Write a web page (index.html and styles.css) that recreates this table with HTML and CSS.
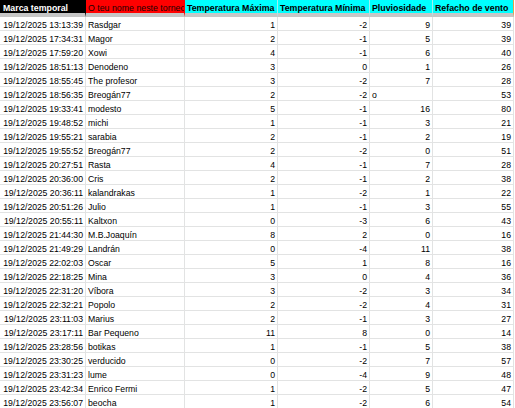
FILE: index.html
```html
<!DOCTYPE html>
<html lang="gl">
<head>
<meta charset="utf-8">
<title>Respostas</title>
<link rel="stylesheet" href="styles.css">
</head>
<body>
<div class="sheet">
  <div class="hd hd-black">Marca temporal</div>
  <div class="hd hd-red">O teu nome neste torneo</div>
  <div class="hd hd-cyan">Temperatura Máxima</div>
  <div class="hd hd-cyan">Temperatura Mínima</div>
  <div class="hd hd-cyan">Pluviosidade</div>
  <div class="hd hd-cyan hd-last">Refacho de vento</div>

  <div class="c r">19/12/2025 13:13:39</div><div class="c">Rasdgar</div><div class="c r">1</div><div class="c r">-2</div><div class="c r">9</div><div class="c r">39</div>
  <div class="c r">19/12/2025 17:34:31</div><div class="c">Magor</div><div class="c r">2</div><div class="c r">-1</div><div class="c r">5</div><div class="c r">39</div>
  <div class="c r">19/12/2025 17:59:20</div><div class="c">Xowi</div><div class="c r">4</div><div class="c r">-1</div><div class="c r">6</div><div class="c r">40</div>
  <div class="c r">19/12/2025 18:51:13</div><div class="c">Denodeno</div><div class="c r">3</div><div class="c r">0</div><div class="c r">1</div><div class="c r">26</div>
  <div class="c r">19/12/2025 18:55:45</div><div class="c">The profesor</div><div class="c r">3</div><div class="c r">-2</div><div class="c r">7</div><div class="c r">28</div>
  <div class="c r">19/12/2025 18:56:35</div><div class="c">Breogán77</div><div class="c r">2</div><div class="c r">-2</div><div class="c">o</div><div class="c r">53</div>
  <div class="c r">19/12/2025 19:33:41</div><div class="c">modesto</div><div class="c r">5</div><div class="c r">-1</div><div class="c r">16</div><div class="c r">80</div>
  <div class="c r">19/12/2025 19:48:52</div><div class="c">michi</div><div class="c r">1</div><div class="c r">-1</div><div class="c r">3</div><div class="c r">21</div>
  <div class="c r">19/12/2025 19:55:21</div><div class="c">sarabia</div><div class="c r">2</div><div class="c r">-1</div><div class="c r">2</div><div class="c r">19</div>
  <div class="c r">19/12/2025 19:55:52</div><div class="c">Breogán77</div><div class="c r">2</div><div class="c r">-2</div><div class="c r">0</div><div class="c r">51</div>
  <div class="c r">19/12/2025 20:27:51</div><div class="c">Rasta</div><div class="c r">4</div><div class="c r">-1</div><div class="c r">7</div><div class="c r">28</div>
  <div class="c r">19/12/2025 20:36:00</div><div class="c">Cris</div><div class="c r">2</div><div class="c r">-1</div><div class="c r">2</div><div class="c r">38</div>
  <div class="c r">19/12/2025 20:36:11</div><div class="c">kalandrakas</div><div class="c r">1</div><div class="c r">-2</div><div class="c r">1</div><div class="c r">22</div>
  <div class="c r">19/12/2025 20:51:26</div><div class="c">Julio</div><div class="c r">1</div><div class="c r">-1</div><div class="c r">3</div><div class="c r">55</div>
  <div class="c r">19/12/2025 20:55:11</div><div class="c">Kaltxon</div><div class="c r">0</div><div class="c r">-3</div><div class="c r">6</div><div class="c r">43</div>
  <div class="c r">19/12/2025 21:44:30</div><div class="c">M.B.Joaquín</div><div class="c r">8</div><div class="c r">2</div><div class="c r">0</div><div class="c r">16</div>
  <div class="c r">19/12/2025 21:49:29</div><div class="c">Landrán</div><div class="c r">0</div><div class="c r">-4</div><div class="c r">11</div><div class="c r">38</div>
  <div class="c r">19/12/2025 22:02:03</div><div class="c">Oscar</div><div class="c r">5</div><div class="c r">1</div><div class="c r">8</div><div class="c r">16</div>
  <div class="c r">19/12/2025 22:18:25</div><div class="c">Mina</div><div class="c r">3</div><div class="c r">0</div><div class="c r">4</div><div class="c r">36</div>
  <div class="c r">19/12/2025 22:31:20</div><div class="c">Víbora</div><div class="c r">3</div><div class="c r">-2</div><div class="c r">3</div><div class="c r">34</div>
  <div class="c r">19/12/2025 22:32:21</div><div class="c">Popolo</div><div class="c r">2</div><div class="c r">-2</div><div class="c r">4</div><div class="c r">31</div>
  <div class="c r">19/12/2025 23:11:03</div><div class="c">Marius</div><div class="c r">2</div><div class="c r">-1</div><div class="c r">3</div><div class="c r">27</div>
  <div class="c r">19/12/2025 23:17:11</div><div class="c">Bar Pequeno</div><div class="c r">11</div><div class="c r">8</div><div class="c r">0</div><div class="c r">14</div>
  <div class="c r">19/12/2025 23:28:56</div><div class="c">botikas</div><div class="c r">1</div><div class="c r">-1</div><div class="c r">5</div><div class="c r">38</div>
  <div class="c r">19/12/2025 23:30:25</div><div class="c">verducido</div><div class="c r">0</div><div class="c r">-2</div><div class="c r">7</div><div class="c r">57</div>
  <div class="c r">19/12/2025 23:31:23</div><div class="c">lume</div><div class="c r">0</div><div class="c r">-4</div><div class="c r">9</div><div class="c r">48</div>
  <div class="c r">19/12/2025 23:42:34</div><div class="c">Enrico Fermi</div><div class="c r">1</div><div class="c r">-2</div><div class="c r">5</div><div class="c r">47</div>
  <div class="c r">19/12/2025 23:56:07</div><div class="c">beocha</div><div class="c r">1</div><div class="c r">-2</div><div class="c r">6</div><div class="c r">54</div>
</div>
</body>
</html>
```

FILE: styles.css
```css
html, body {
  margin: 0;
  padding: 0;
  background: #ffffff;
}

body {
  font-family: "Liberation Sans", Arial, sans-serif;
  color: #000000;
  overflow: hidden;
}

.sheet {
  display: grid;
  grid-template-columns: 86px 99px 93px 92px 63px 81px;
  grid-auto-rows: auto;
  width: 514px;
}

.hd,
.c {
  box-sizing: border-box;
  display: flex;
  align-items: flex-end;
  overflow: hidden;
  white-space: nowrap;
  line-height: normal;
  padding: 0 2px;
}

.hd {
  height: 17px;
  border-bottom: 4px solid #c6c6c6;
  border-right: 1px solid #9fefef;
  font-size: 8.8px;
  font-weight: bold;
}

.hd-black {
  background: #000000;
  color: #ffffff;
  border-right-color: #000000;
  padding-left: 3px;
}

.hd-red {
  background: #ff0000;
  color: #1a0000;
  font-weight: normal;
  border-right-color: #ff0000;
}

.hd-cyan {
  background: #00ffff;
  color: #000000;
}

.hd-last {
  border-right-color: #e8a04c;
}

.c {
  height: 14px;
  border-bottom: 1px solid #e2e3e3;
  border-right: 1px solid #e2e3e3;
  font-size: 8.7px;
}

.r {
  justify-content: flex-end;
  padding-right: 2px;
}
```
